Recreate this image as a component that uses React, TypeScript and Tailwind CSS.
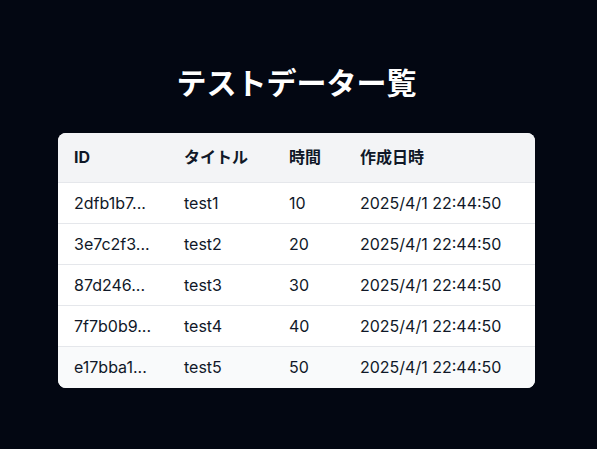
import React from 'react';

const rows = [
    { id: '2dfb1b7...', title: 'test1', time: 10, createdAt: '2025/4/1 22:44:50' },
    { id: '3e7c2f3...', title: 'test2', time: 20, createdAt: '2025/4/1 22:44:50' },
    { id: '87d246...', title: 'test3', time: 30, createdAt: '2025/4/1 22:44:50' },
    { id: '7f7b0b9...', title: 'test4', time: 40, createdAt: '2025/4/1 22:44:50' },
    { id: 'e17bba1...', title: 'test5', time: 50, createdAt: '2025/4/1 22:44:50' },
];

const App: React.FC = () => {
    return (
        <div
            className="min-h-screen bg-[#030712] flex flex-col items-center justify-center pr-[4px] pt-[3px]"
            style={{ fontFamily: 'Inter, "Noto Sans CJK JP", sans-serif' }}
        >
            <h1 className="text-3xl font-bold text-white mb-8">テストデーター覧</h1>

            {/* Data table */}
            <div className="w-[477px] bg-white rounded-lg overflow-hidden">
                <table className="w-full table-fixed text-base text-gray-900 text-left">
                    <thead className="bg-gray-100">
                        <tr>
                            <th className="w-[110px] px-4 h-[50px] font-bold">ID</th>
                            <th className="w-[105px] px-4 h-[50px] font-bold">タイトル</th>
                            <th className="w-[71px] px-4 h-[50px] font-bold">時間</th>
                            <th className="px-4 h-[50px] font-bold">作成日時</th>
                        </tr>
                    </thead>
                    <tbody>
                        {rows.map((row, i) => (
                            <tr
                                key={row.title}
                                className={`border-t border-gray-200 ${i === rows.length - 1 ? 'bg-gray-50' : ''}`}
                            >
                                <td className="px-4 h-[41px] whitespace-nowrap">{row.id}</td>
                                <td className="px-4 h-[41px]">{row.title}</td>
                                <td className="px-4 h-[41px]">{row.time}</td>
                                <td className="px-4 h-[41px] whitespace-nowrap">{row.createdAt}</td>
                            </tr>
                        ))}
                    </tbody>
                </table>
            </div>
        </div>
    );
};

export default App;
